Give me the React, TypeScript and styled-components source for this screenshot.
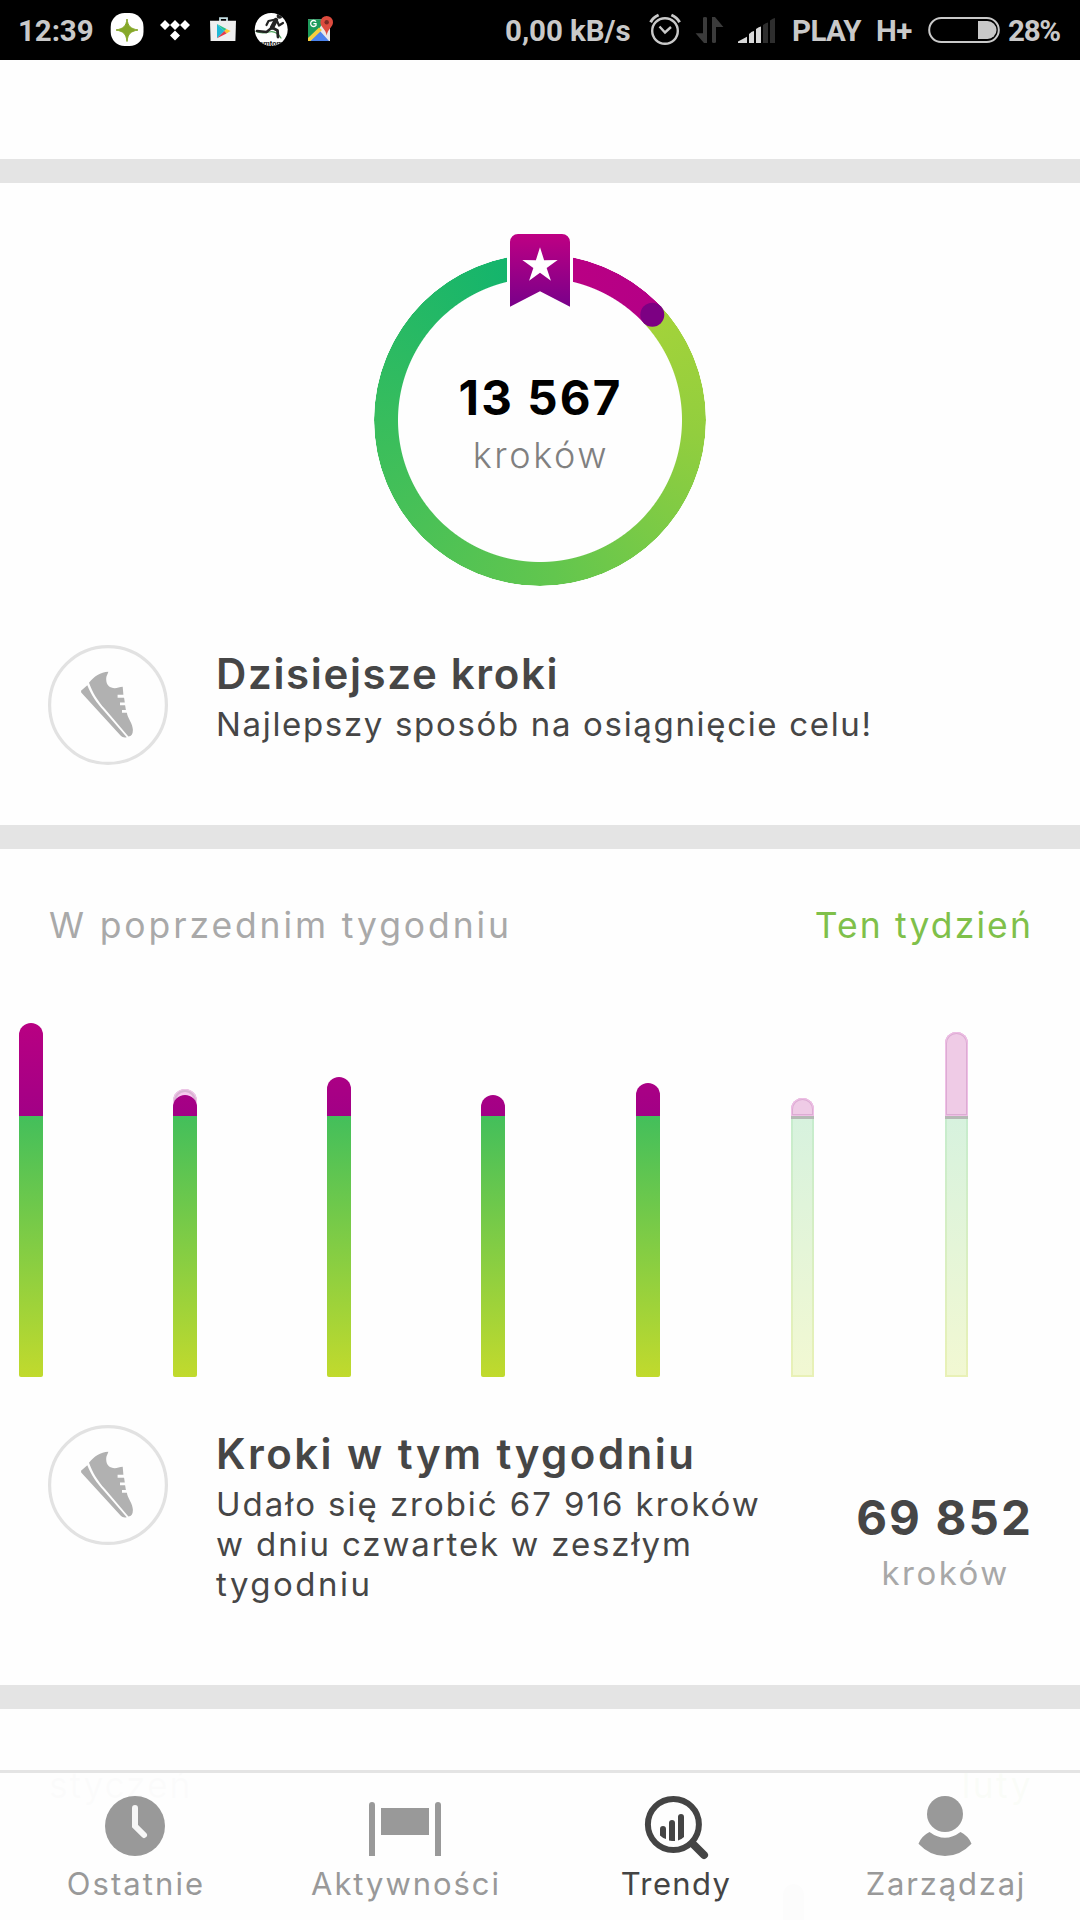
import React from "react";
import styled, { createGlobalStyle } from "styled-components";

const GlobalStyle = createGlobalStyle`
  html, body { margin: 0; padding: 0; background: #fefefe; }
  * { box-sizing: border-box; }
  svg { display: block; flex: none; }
`;

const Screen = styled.div`
  position: relative;
  display: flex;
  flex-direction: column;
  width: 1080px;
  height: 1920px;
  overflow: hidden;
  background: #fefefe;
  color: #464646;
  font-family: Inter, "Open Sans", sans-serif;
  white-space: nowrap;
`;

/* ---------- status bar ---------- */

const StatusBar = styled.header`
  display: flex;
  justify-content: space-between;
  flex: none;
  height: 60px;
  padding-left: 18px;
  background: #000;
  color: #c9c9c9;
  font-family: Roboto, sans-serif;
`;

const StatusGroup = styled.div`
  display: flex;
`;

const StatusText = styled.span<{ $width: number; $tracking?: number }>`
  width: ${(p) => p.$width}px;
  height: 60px;
  font-size: 29.5px;
  font-weight: 700;
  line-height: 62px;
  letter-spacing: ${(p) => p.$tracking ?? 0}px;
`;

/* ---------- cards ---------- */

const TopGap = styled.div`
  flex: none;
  height: 99px;
`;

const Divider = styled.div`
  flex: none;
  height: 24px;
  background: #e4e4e4;
`;

const Card = styled.section<{ $height: number }>`
  display: flex;
  flex-direction: column;
  flex: none;
  height: ${(p) => p.$height}px;
`;

const Ring = styled.div`
  position: relative;
  align-self: center;
  display: flex;
  flex-direction: column;
  align-items: center;
  flex: none;
  width: 332px;
  height: 332px;
  margin-top: 71px;
  padding-top: 116px;
`;

const RingTrack = styled.div`
  position: absolute;
  inset: 0;
  border-radius: 50%;
  background: conic-gradient(
    #bb0083 0deg,
    #b40086 46.8deg,
    #a4d33a 46.8deg,
    #92ce3e 95deg,
    #62c64e 175deg,
    #3cbe5b 260deg,
    #12b46d 352deg,
    #12b46d 360deg
  );
  mask: radial-gradient(circle closest-side, transparent 141.5px, #000 142.5px, #000 165.5px, transparent 166.2px);
`;

const RingOverlay = styled.svg`
  position: absolute;
  left: 0;
  top: -24px;
`;

const RingValue = styled.div`
  position: relative;
  padding-left: 1px;
  color: #000;
  font-size: 47.5px;
  font-weight: 700;
  line-height: 56px;
  letter-spacing: 2.1px;
`;

const RingUnit = styled.div`
  position: relative;
  margin-top: 9px;
  padding-left: 2px;
  color: #808080;
  font-size: 36px;
  font-weight: 300;
  line-height: 40px;
  letter-spacing: 2.62px;
`;

const InfoRow = styled.div<{ $top: number }>`
  display: flex;
  align-items: flex-start;
  margin-top: ${(p) => p.$top}px;
  padding: 0 47px 0 48px;
`;

const InfoText = styled.div`
  display: flex;
  flex-direction: column;
  flex: 1;
  margin: 4px 0 0 48px;
`;

const InfoTitle = styled.h2<{ $tracking: number }>`
  margin: 0 0 5px;
  font-size: 42px;
  font-weight: 600;
  line-height: 50px;
  letter-spacing: ${(p) => p.$tracking}px;
`;

const InfoLine = styled.span<{ $tracking: number }>`
  font-size: 33px;
  line-height: 40px;
  letter-spacing: ${(p) => p.$tracking}px;
`;

const Total = styled.div`
  display: flex;
  flex-direction: column;
  align-items: center;
  margin-top: 65px;
`;

const TotalValue = styled.div`
  font-size: 47.5px;
  font-weight: 700;
  line-height: 56px;
  letter-spacing: 2.12px;
`;

const TotalUnit = styled.div`
  margin-top: 7px;
  padding-left: 2px;
  color: #a8a8a8;
  font-size: 33px;
  line-height: 40px;
  letter-spacing: 2.45px;
`;

const PeriodRow = styled.div`
  display: flex;
  justify-content: space-between;
  flex: none;
  margin-top: 55px;
  padding: 0 47px 0 49px;
`;

const Period = styled.span<{ $active?: boolean; $tracking: number }>`
  color: ${(p) => (p.$active ? "#7fc04a" : "#a9a9a9")};
  font-size: 35.5px;
  line-height: 44px;
  letter-spacing: ${(p) => p.$tracking}px;
`;

/* ---------- weekly chart ---------- */

const Chart = styled.div`
  display: grid;
  grid-template-columns: repeat(7, 1fr);
  align-items: end;
  flex: none;
  height: 429px;
`;

const Day = styled.div`
  position: relative;
  display: flex;
  flex-direction: column;
  width: 24px;
  margin-left: 18.6px;
`;

const Over = styled.div<{ $height: number }>`
  height: ${(p) => p.$height}px;
  border-radius: 12px 12px 0 0;
  background: linear-gradient(to top, #a20086, #b80082 93px);
`;

const Goal = styled.div`
  height: 261px;
  border-radius: 0 0 2px 2px;
  background: linear-gradient(#43bf5b, #c1da2d);
`;

const GhostDay = styled(Day)`
  width: 23px;
  margin-left: 19.5px;
`;

const GhostOver = styled.div<{ $height: number }>`
  height: ${(p) => p.$height}px;
  border-radius: 12px 12px 0 0;
  background: #efcbe6;
  box-shadow: inset 0 0 0 1px #efbfe6, inset 0 0 0 2px #dcacd3;
`;

const GhostGoal = styled.div`
  height: 261px;
  border-top: 3px solid #b5b9b5;
  background:
    linear-gradient(#c6eccd, #e9f1b6) left / 2px 100% no-repeat,
    linear-gradient(#c6eccd, #e9f1b6) right / 2px 100% no-repeat,
    linear-gradient(#e9f1b6, #e9f1b6) bottom / 100% 2px no-repeat,
    linear-gradient(#d7f2de, #f2f8d2);
`;

const Peek = styled.div`
  position: absolute;
  z-index: 0;
  top: -6px;
  left: 0;
  width: 24px;
  height: 24px;
  border-radius: 12px 12px 0 0;
  background: #f6c9ee;
  box-shadow: inset 0 0 0 1px #efc6e8, inset 0 0 0 3px #d9b4d3;

  & + div { position: relative; }
`;

const NextBar = styled.div`
  flex: none;
  width: 21px;
  height: 60px;
  margin: 76px 0 0 783px;
  border-radius: 10px 10px 0 0;
  background: #c0c0c0;
`;

/* ---------- tab bar ---------- */

const TabBar = styled.nav`
  position: absolute;
  left: 0;
  right: 0;
  bottom: 0;
  display: grid;
  grid-template-columns: repeat(4, 1fr);
  height: 150px;
  border-top: 3px solid #e4e4e4;
  background: rgba(254, 254, 254, 0.97);
`;

const Tab = styled.div<{ $active?: boolean }>`
  display: flex;
  flex-direction: column;
  align-items: center;
  padding-top: 17px;
  color: ${(p) => (p.$active ? "#444" : "#999")};
`;

const TabLabel = styled.span<{ $tracking: number }>`
  margin-top: 2px;
  padding-left: 2px;
  font-size: 31px;
  line-height: 40px;
  letter-spacing: ${(p) => p.$tracking}px;
`;

/* ---------- drawings ---------- */

const starPoints = (cx: number, cy: number, outer: number, inner: number) =>
  Array.from({ length: 10 }, (_, i) => {
    const r = i % 2 ? inner : outer;
    const a = (Math.PI / 5) * i - Math.PI / 2;
    return `${(cx + r * Math.cos(a)).toFixed(2)},${(cy + r * Math.sin(a)).toFixed(2)}`;
  }).join(" ");

const Shoe = () => (
  <svg width="120" height="120" viewBox="0 0 120 120">
    <circle cx="60" cy="60" r="58.4" fill="none" stroke="#e2e2e2" strokeWidth="3.2" />
    <path
      fill="#b1b1b1"
      d="M41 37.7C46 31.5 52.5 27.3 60.3 26.8C60 29 58.2 30.5 58.2 34.5C58.2 40 62 43.2 66.8 43.2C69 43 72 42 74.7 41.7L75.4 49.8H69.6V52.7H76.1L76.8 57.5H72V60.2H77.1L77.9 65H74V67.7H78.9C79.4 73 84.9 78.5 84.9 85C84.9 89 83.4 91.2 80.4 91.5L57 64C49.5 55.5 44.5 47.5 41 37.7Z"
    />
    <path
      fill="#b1b1b1"
      d="M33 45.7L39.3 40.2C43.5 50.5 48 57 55.4 65.3L78.7 92.2C76.5 92.8 74.3 92.3 72.3 90.3L33.2 47.5Z"
    />
  </svg>
);

const Badge = () => (
  <RingOverlay width="332" height="130" viewBox="0 0 332 130">
    <defs>
      <linearGradient id="ribbon" x1="0" y1="0" x2="0" y2="1">
        <stop offset="0" stopColor="#be0083" />
        <stop offset="1" stopColor="#79008a" />
      </linearGradient>
    </defs>
    <rect x="133" y="0" width="66" height="64" fill="#fefefe" />
    <path
      fill="url(#ribbon)"
      d="M144 4H188A8 8 0 0 1 196 12V76.7L166 61.3L136 76.7V12A8 8 0 0 1 144 4Z"
    />
    <polygon points={starPoints(166, 35.8, 18.6, 7)} fill="#fff" />
    <circle cx="278.3" cy="84.7" r="12" fill="#7c0083" />
  </RingOverlay>
);

const StatusIcon = ({ x, w, children }: { x: number; w: number; children: React.ReactNode }) => (
  <svg width={w} height="60" viewBox={`${x} 0 ${w} 60`}>
    {children}
  </svg>
);

const LeftIcons = () => (
  <>
    <StatusIcon x={110} w={40}>
      <rect x="110.7" y="13" width="32.8" height="33" rx="14" fill="#fff" />
      <path d="M127 19C128 26 130 28.5 138 30C130 31.5 128 34 127 41.5C126 34 124 31.5 116 30C124 28.5 126 26 127 19Z" fill="#86a829" stroke="#86a829" strokeWidth="1" strokeLinejoin="round" />
    </StatusIcon>
    <StatusIcon x={150} w={50}>
      <path d="M165 20l5 5-5 5-5-5zM175 20l5 5-5 5-5-5zM185 20l5 5-5 5-5-5zM175 30.5l5 5-5 5-5-5z" fill="#fff" />
    </StatusIcon>
    <StatusIcon x={200} w={45}>
      <path d="M220 22V18.2H227V22" fill="none" stroke="#c3dde2" strokeWidth="1.8" />
      <path d="M210 20.8H236L235.4 41H210.6Z" fill="#efefef" />
      <path d="M217 24L224.5 31L217 38.2Z" fill="#20b8d6" />
      <path d="M217 24L226.5 29L224.5 31Z" fill="#29c48e" />
      <path d="M226.5 29L230.6 31L226.5 33.4L224.3 31Z" fill="#fdc62f" />
      <path d="M217 38.2L224.4 31L226.5 33.4Z" fill="#e5394a" />
    </StatusIcon>
    <StatusIcon x={245} w={50}>
      <clipPath id="runnerClip">
        <circle cx="271.2" cy="29.5" r="16.5" />
      </clipPath>
      <circle cx="271.2" cy="29.5" r="16.5" fill="#fff" />
      <g clipPath="url(#runnerClip)" fill="none" strokeLinecap="round" strokeLinejoin="round">
        <path d="M256 31.5Q262 34 269 32T281 38" stroke="#4da05a" strokeWidth="1.2" />
        <path d="M276 20L272 27.5" stroke="#222" strokeWidth="4.4" />
        <path d="M275.5 19.5L268.5 21L266.5 25" stroke="#222" strokeWidth="2.2" />
        <path d="M277 21L279 25.5L283 23" stroke="#222" strokeWidth="2.2" />
        <path d="M272 27.5L277.5 30.5L278 37" stroke="#222" strokeWidth="2.8" />
        <path d="M271.5 28L266.5 32L257 31" stroke="#222" strokeWidth="2.6" />
        <circle cx="279.5" cy="16" r="2.8" fill="#222" />
      </g>
      <g clipPath="url(#runnerClip)">
        <text x="271" y="45.5" textAnchor="middle" fontFamily="Roboto, sans-serif" fontSize="7.5" fontWeight="700" fill="#222">
          omtom
        </text>
      </g>
    </StatusIcon>
    <StatusIcon x={295} w={50}>
      <path d="M308 19.3H330V41H308Z" fill="#e8e8e8" />
      <path d="M308 19.3H325L319 29L308 40Z" fill="#1d9a5b" />
      <path d="M310 41L319.5 30.5L329 41Z" fill="#4a82ec" />
      <path d="M308 38L319 27.5L322 30L310.5 41H308Z" fill="#f8cf3d" />
      <path d="M316 21.6A3 3 0 1 0 316 25.4V23.6H313.4" fill="none" stroke="#fff" strokeWidth="1.3" />
      <path d="M326.7 16A6.3 6.3 0 0 1 333 22.3C333 27 327.6 29 326.7 35.5C325.8 29 320.4 27 320.4 22.3A6.3 6.3 0 0 1 326.7 16Z" fill="#dd4b3e" />
      <circle cx="326.7" cy="22.3" r="2.2" fill="#7c2a23" />
    </StatusIcon>
  </>
);

const Alarm = () => (
  <StatusIcon x={648} w={38}>
    <g fill="none" stroke="#c9c9c9">
      <circle cx="665" cy="31" r="12.8" strokeWidth="2.4" />
      <path d="M659.5 26.5L665 32.5L671 27" strokeWidth="2.4" />
      <path d="M650.6 22.2Q653 17.5 658.6 15" strokeWidth="3" />
      <path d="M679.6 22.2Q677 17.5 671.4 15" strokeWidth="3" />
    </g>
  </StatusIcon>
);

const DataArrows = () => (
  <StatusIcon x={686} w={46}>
    <path d="M703 18Q703 17 705 17T707 18V43H704L695.6 33.3H703Z" fill="#3b3b3b" />
    <path d="M712 42V17H715L723.4 27H716V42Q716 43 714 43T712 42Z" fill="#3b3b3b" />
  </StatusIcon>
);

const Signal = () => (
  <StatusIcon x={732} w={60}>
    <path d="M738 43V41.5L747 36.8V43Z" fill="#d8d8d8" />
    <path d="M749 43V34Q752 31 754 31V43Z" fill="#d8d8d8" />
    <path d="M756 43V29Q759 26.5 761 26.5V43Z" fill="#d8d8d8" />
    <path d="M763 43V25Q766 22.5 768 22.5V43Z" fill="#2e2e2e" />
    <path d="M770 43V20.5Q773 18 775 18V43Z" fill="#2e2e2e" />
  </StatusIcon>
);

const Battery = () => (
  <StatusIcon x={926} w={82}>
    <rect x="929.2" y="18" width="69.6" height="24" rx="12" fill="none" stroke="#c9c9c9" strokeWidth="2" />
    <path d="M978 21H987.5A9 9 0 0 1 987.5 39H978Z" fill="#c9c9c9" />
  </StatusIcon>
);

const ClockIcon = () => (
  <svg width="72" height="72" viewBox="0 0 72 72">
    <circle cx="36" cy="36" r="30" fill="currentColor" />
    <path d="M36 18V36L45 45" fill="none" stroke="#f7f7f7" strokeWidth="6" strokeLinecap="round" />
  </svg>
);

const FlagIcon = () => (
  <svg width="72" height="72" viewBox="0 0 72 72" fill="currentColor">
    <path d="M0 66V15A3 3 0 0 1 6 15V66ZM66 66V15A3 3 0 0 1 72 15V66ZM12 18H60V45H12Z" />
  </svg>
);

const TrendIcon = () => (
  <svg width="72" height="72" viewBox="0 0 72 72" fill="currentColor">
    <circle cx="34.4" cy="34.5" r="25.5" fill="none" stroke="currentColor" strokeWidth="6" />
    <path d="M53.5 53.5L65 65" stroke="currentColor" strokeWidth="8" strokeLinecap="round" />
    <path d="M21 45.5V39A3 3 0 0 1 27 39V49Q23.5 48 21 45.5ZM30 50.5V33A3 3 0 0 1 36 33V51H33ZM39 50.5V27A3 3 0 0 1 45 27V47Q42.5 49.5 39 50.5Z" />
  </svg>
);

const PersonIcon = () => (
  <svg width="72" height="72" viewBox="0 0 72 72" fill="currentColor">
    <circle cx="36" cy="24" r="18" />
    <path d="M20.5 42Q36 53.5 51.5 42Q59.5 46 62.5 53.7Q51 66 36 66Q21 66 9.5 53.7Q12.5 46 20.5 42Z" />
  </svg>
);

/* ---------- data ---------- */

type DayData = { over: number; ghost?: boolean; peek?: boolean };

const week: DayData[] = [
  { over: 93 },
  { over: 21, peek: true },
  { over: 39 },
  { over: 21 },
  { over: 33 },
  { over: 18, ghost: true },
  { over: 84, ghost: true },
];

const tabs = [
  { label: "Ostatnie", icon: <ClockIcon />, tracking: 2.08 },
  { label: "Aktywności", icon: <FlagIcon />, tracking: 1.94 },
  { label: "Trendy", icon: <TrendIcon />, tracking: 1.35, active: true },
  { label: "Zarządzaj", icon: <PersonIcon />, tracking: 1.8 },
];

export default function App() {
  return (
    <Screen>
      <GlobalStyle />
      <StatusBar>
        <StatusGroup>
          <StatusText $width={92} $tracking={-0.1}>12:39</StatusText>
          <LeftIcons />
        </StatusGroup>
        <StatusGroup>
          <StatusText $width={143} $tracking={-0.05}>0,00 kB/s</StatusText>
          <Alarm />
          <DataArrows />
          <Signal />
          <StatusText $width={84} $tracking={-0.6}>PLAY</StatusText>
          <StatusText $width={50} $tracking={-0.5}>H+</StatusText>
          <Battery />
          <StatusText $width={72} $tracking={-1.3}>28%</StatusText>
        </StatusGroup>
      </StatusBar>

      <TopGap />
      <Divider />

      <Card $height={642}>
        <Ring>
          <RingTrack />
          <Badge />
          <RingValue>13 567</RingValue>
          <RingUnit>kroków</RingUnit>
        </Ring>
        <InfoRow $top={59}>
          <Shoe />
          <InfoText>
            <InfoTitle $tracking={1.66}>Dzisiejsze kroki</InfoTitle>
            <InfoLine $tracking={1.67}>Najlepszy sposób na osiągnięcie celu!</InfoLine>
          </InfoText>
        </InfoRow>
      </Card>
      <Divider />

      <Card $height={836}>
        <PeriodRow>
          <Period $tracking={2.89}>W poprzednim tygodniu</Period>
          <Period $active $tracking={2.11}>Ten tydzień</Period>
        </PeriodRow>
        <Chart>
          {week.map((d, i) =>
            d.ghost ? (
              <GhostDay key={i}>
                <GhostOver $height={d.over} />
                <GhostGoal />
              </GhostDay>
            ) : (
              <Day key={i}>
                {d.peek && <Peek />}
                <Over $height={d.over} />
                <Goal />
              </Day>
            )
          )}
        </Chart>
        <InfoRow $top={48}>
          <Shoe />
          <InfoText>
            <InfoTitle $tracking={2.46}>Kroki w tym tygodniu</InfoTitle>
            <InfoLine $tracking={1.96}>Udało się zrobić 67 916 kroków</InfoLine>
            <InfoLine $tracking={1.89}>w dniu czwartek w zeszłym</InfoLine>
            <InfoLine $tracking={2.49}>tygodniu</InfoLine>
          </InfoText>
          <Total>
            <TotalValue>69 852</TotalValue>
            <TotalUnit>kroków</TotalUnit>
          </Total>
        </InfoRow>
      </Card>
      <Divider />

      <Card $height={211}>
        <PeriodRow>
          <Period $tracking={1.76}>styczeń</Period>
          <Period $active $tracking={2.37}>luty</Period>
        </PeriodRow>
        <NextBar />
      </Card>

      <TabBar>
        {tabs.map((t) => (
          <Tab key={t.label} $active={t.active}>
            {t.icon}
            <TabLabel $tracking={t.tracking}>{t.label}</TabLabel>
          </Tab>
        ))}
      </TabBar>
    </Screen>
  );
}
